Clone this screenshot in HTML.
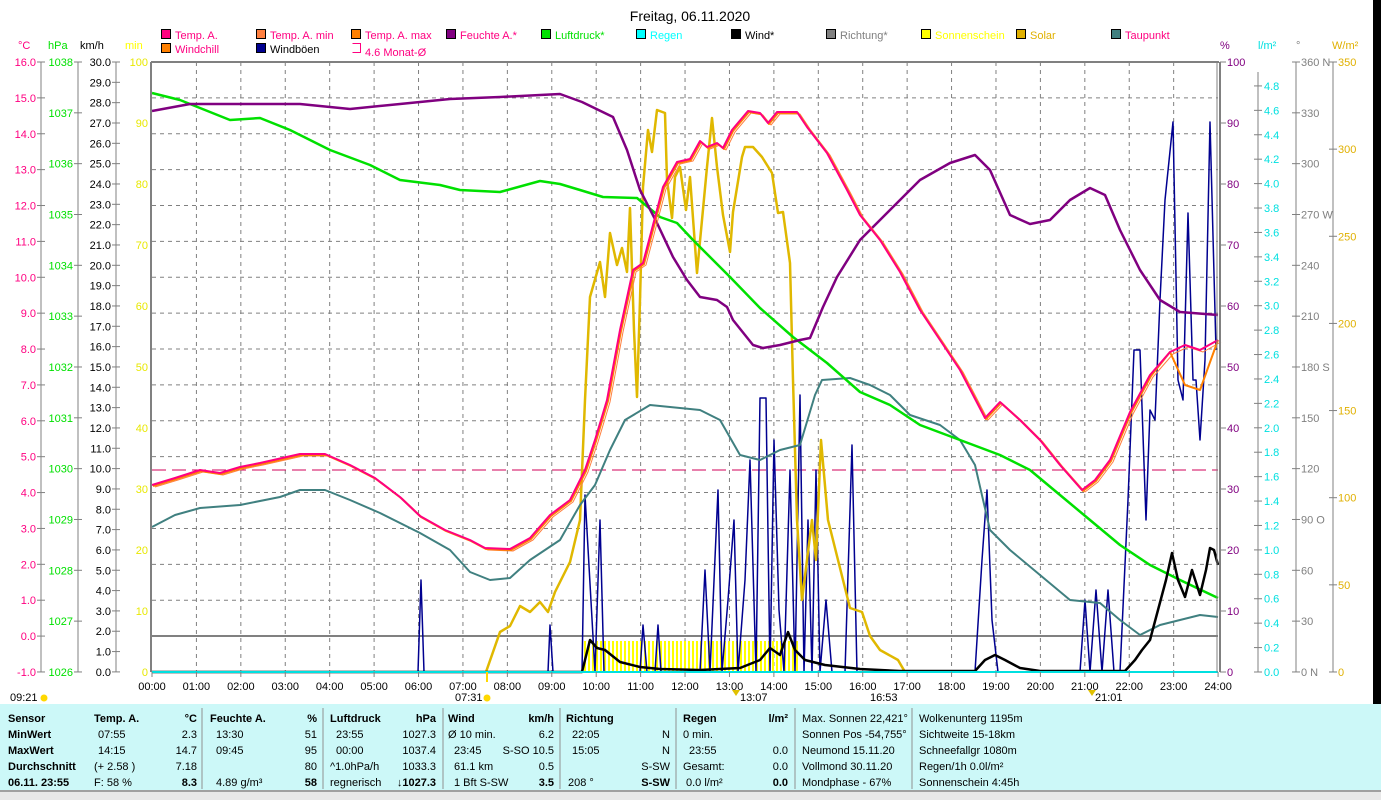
<!DOCTYPE html>
<html><head><meta charset="utf-8">
<style>
html,body{margin:0;padding:0;background:#fff;width:1381px;height:800px;overflow:hidden;font-family:"Liberation Sans",sans-serif;}
svg{position:absolute;left:0;top:0}
text{font-family:"Liberation Sans",sans-serif;font-size:11px}
</style></head><body>
<svg id="s" width="1381" height="800" xmlns="http://www.w3.org/2000/svg">
<rect x="1373" y="0" width="8" height="704" fill="#000"/>
<text x="690" y="21" text-anchor="middle" style="font-size:14px">Freitag, 06.11.2020</text>
<g id="grid"></g>
<defs><pattern id="sun" width="4" height="40" patternUnits="userSpaceOnUse"><rect width="2" height="40" fill="#ffff00"/></pattern></defs>
<rect x="582" y="641" width="218" height="31" fill="url(#sun)"/>
<line x1="152" y1="636" x2="1218" y2="636" stroke="#808080" stroke-width="2"/>
<line x1="152" y1="470" x2="1218" y2="470" stroke="#d0005a" stroke-width="1" stroke-dasharray="14,6"/>
<g id="curves" fill="none" stroke-linejoin="round"></g>
<line x1="152" y1="672" x2="1218" y2="672" stroke="#00e0e0" stroke-width="2"/>
<line x1="151" y1="62" x2="1219" y2="62" stroke="#808080" stroke-width="2"/>
<line x1="151" y1="62" x2="151" y2="672" stroke="#808080" stroke-width="2"/>
<line x1="1217" y1="62" x2="1217" y2="672" stroke="#808080" stroke-width="1"/>
<line x1="1220" y1="62" x2="1220" y2="672" stroke="#808080" stroke-width="2"/>
<g id="axes"></g>
<g id="legend"></g>
</svg>
<div style="position:absolute;left:0;top:704px;width:1381px;height:86px;background:#ccf8f8"></div>
<div style="position:absolute;left:0;top:790px;width:1381px;height:10px;background:#e8e8e8;border-top:2px solid #a0a0a0;box-sizing:border-box"></div>
<svg id="t" width="1381" height="800" xmlns="http://www.w3.org/2000/svg"></svg>
<script>
var NS="http://www.w3.org/2000/svg";
function el(p,tag,a,txt){var e=document.createElementNS(NS,tag);for(var k in a)e.setAttribute(k,a[k]);if(txt!=null)e.textContent=txt;p.appendChild(e);return e;}
var g=document.getElementById('grid'),ax=document.getElementById('axes'),cv=document.getElementById('curves'),lg=document.getElementById('legend'),T=document.getElementById('t');
var X0=152,PX=44.42;
for(var h=1;h<24;h++){var x=X0+h*PX;el(g,'line',{x1:x,y1:62,x2:x,y2:672,stroke:'#808080','stroke-dasharray':'4,4'});}
for(var i=1;i<17;i++){var y=62+i*35.88;el(g,'line',{x1:152,y1:y,x2:1218,y2:y,stroke:'#808080','stroke-dasharray':'4,4'});}
for(var h=0;h<=24;h++){var x=X0+h*PX;el(ax,'text',{x:x,y:690,'text-anchor':'middle'},(h<10?'0':'')+h+':00');el(ax,'line',{x1:x,y1:672,x2:x,y2:677,stroke:'#808080'});}
el(ax,'text',{x:10,y:701},'09:21');el(ax,'text',{x:455,y:701},'07:31');el(ax,'text',{x:740,y:701},'13:07');el(ax,'text',{x:870,y:701},'16:53');el(ax,'text',{x:1095,y:701},'21:01');
el(ax,'circle',{cx:44,cy:698,r:3.5,fill:'#ffd800'});el(ax,'circle',{cx:487,cy:698,r:3.5,fill:'#ffd800'});
el(ax,'rect',{x:486,y:672,width:2,height:10,fill:'#ffd800'});
el(ax,'path',{d:'M732 690 l4 6 l4 -6z',fill:'#e0c000'});el(ax,'path',{d:'M1088 690 l4 6 l4 -6z',fill:'#e0c000'});
el(ax,'line',{x1:41,y1:62,x2:41,y2:672,stroke:'#808080'});
el(ax,'line',{x1:78,y1:62,x2:78,y2:672,stroke:'#808080'});
el(ax,'line',{x1:116,y1:62,x2:116,y2:672,stroke:'#808080'});
el(ax,'text',{x:18,y:49,fill:'#ff0080'},'°C');el(ax,'text',{x:48,y:49,fill:'#00e000'},'hPa');el(ax,'text',{x:80,y:49},'km/h');el(ax,'text',{x:125,y:49,fill:'#ffff00'},'min');
for(var i=0;i<=17;i++){var v=16-i,y=62+i*35.88;el(ax,'text',{x:36,y:y+4,'text-anchor':'end',fill:'#ff0080'},v.toFixed(1));el(ax,'line',{x1:37,y1:y,x2:45,y2:y,stroke:'#808080'});}
for(var i=0;i<=12;i++){var v=1038-i,y=62+i*50.83;el(ax,'text',{x:73,y:y+4,'text-anchor':'end',fill:'#00e000'},v);el(ax,'line',{x1:74,y1:y,x2:82,y2:y,stroke:'#808080'});}
for(var i=0;i<=30;i++){var v=30-i,y=62+i*20.33;el(ax,'text',{x:111,y:y+4,'text-anchor':'end'},v.toFixed(1));el(ax,'line',{x1:112,y1:y,x2:120,y2:y,stroke:'#808080'});}
for(var i=0;i<=10;i++){var v=100-i*10,y=62+i*61;el(ax,'text',{x:148,y:y+4,'text-anchor':'end',fill:'#e8e800'},v);}
el(ax,'line',{x1:1258,y1:72,x2:1258,y2:672,stroke:'#808080'});
el(ax,'line',{x1:1296,y1:62,x2:1296,y2:672,stroke:'#808080'});
el(ax,'line',{x1:1333,y1:62,x2:1333,y2:672,stroke:'#808080'});
el(ax,'text',{x:1220,y:49,fill:'#800080'},'%');el(ax,'text',{x:1258,y:49,fill:'#00e0e0'},'l/m²');el(ax,'text',{x:1296,y:49,fill:'#808080'},'°');el(ax,'text',{x:1332,y:49,fill:'#e0b000'},'W/m²');
for(var i=0;i<=10;i++){var v=100-i*10,y=62+i*61;el(ax,'text',{x:1227,y:y+4,fill:'#800080'},v);el(ax,'line',{x1:1220,y1:y,x2:1226,y2:y,stroke:'#808080'});}
for(var i=0;i<=24;i++){var v=(i*0.2).toFixed(1),y=672-i*24.42;el(ax,'text',{x:1264,y:y+4,fill:'#00e0e0'},v);el(ax,'line',{x1:1254,y1:y,x2:1262,y2:y,stroke:'#808080'});}
var dl={360:'360 N',270:'270 W',180:'180 S',90:'90  O',0:'0   N'};
for(var i=0;i<=12;i++){var v=360-i*30,y=62+i*50.83;el(ax,'text',{x:1301,y:y+4,fill:'#808080'},dl[v]||v);el(ax,'line',{x1:1292,y1:y,x2:1300,y2:y,stroke:'#808080'});}
for(var i=0;i<=7;i++){var v=350-i*50,y=62+i*87.14;el(ax,'text',{x:1338,y:y+4,fill:'#e0b000'},v);el(ax,'line',{x1:1329,y1:y,x2:1337,y2:y,stroke:'#808080'});}
var L=[[162,38,'#ff0080','Temp. A.','#ff0080'],[257,38,'#ff8040','Temp. A. min','#ff0080'],[352,38,'#ff8000','Temp. A. max','#ff0080'],[447,38,'#800080','Feuchte A.*','#ff0080'],[542,38,'#00e000','Luftdruck*','#00e000'],[637,38,'#00ffff','Regen','#00ffff'],[732,38,'#000000','Wind*','#000'],[827,38,'#808080','Richtung*','#808080'],[922,38,'#ffff00','Sonnenschein','#ffff00'],[1017,38,'#e0b000','Solar','#e0b000'],[1112,38,'#408080','Taupunkt','#ff0080'],[162,52,'#ff8000','Windchill','#ff0080'],[257,52,'#000090','Windböen','#000']];
L.forEach(function(a){el(lg,'rect',{x:a[0]-0.5,y:a[1]-8.5,width:9,height:9,fill:a[2],stroke:'#000'});el(lg,'text',{x:a[0]+13,y:a[1]+1,fill:a[4]},a[3]);});
el(lg,'path',{d:'M352.5 43.5h8v9h-8',fill:'none',stroke:'#ff0080'});el(lg,'text',{x:365,y:56,fill:'#ff0080'},'4.6 Monat-Ø');
function P(pts,col,w){el(cv,'polyline',{points:pts.map(function(p){return p.join(',')}).join(' '),stroke:col,'stroke-width':w||2});}
var temp=[[152,485],[175,478],[200,470],[220,473],[240,467],[260,463],[300,454],[325,454],[350,465],[375,478],[400,497],[420,516],[445,530],[470,540],[485,548],[510,549],[530,538],[550,515],[570,500],[585,470],[595,440],[607,400],[620,330],[633,270],[643,263],[663,187],[677,162],[690,159],[700,141],[707,147],[717,143],[723,148],[732,130],[748,111],[760,113],[768,123],[777,112],[797,112],[807,127],[827,153],[847,190],[860,215],[880,240],[900,272],[920,310],[940,340],[960,370],[985,418],[1000,402],[1020,420],[1040,440],[1060,465],[1082,490],[1095,480],[1110,460],[1130,412],[1150,375],[1170,352],[1185,345],[1200,350],[1218,340]];
var gust=[[152,672],[418,672],[421,580],[424,672],[548,672],[550,625],[553,672],[582,672],[585,495],[595,672],[600,520],[604,672],[640,672],[643,625],[647,672],[655,672],[658,625],[661,672],[700,672],[705,570],[710,672],[718,490],[722,672],[728,600],[734,520],[738,672],[745,580],[750,460],[756,672],[760,398],[766,398],[770,672],[774,440],[779,610],[784,672],[790,470],[795,672],[800,395],[804,672],[808,520],[812,672],[816,470],[820,672],[826,600],[832,672],[845,672],[852,445],[857,672],[975,672],[982,560],[987,490],[992,620],[998,672],[1080,672],[1085,600],[1090,672],[1096,590],[1102,672],[1108,590],[1114,672],[1120,672],[1128,500],[1134,350],[1140,350],[1146,520],[1150,410],[1155,420],[1160,300],[1165,200],[1173,122],[1178,380],[1183,400],[1188,213],[1193,380],[1196,380],[1200,440],[1205,360],[1210,122],[1216,350]];
P(gust,'#000090',1.5);
P([[486,672],[500,632],[510,626],[520,606],[530,612],[540,602],[548,612],[555,592],[570,562],[580,520],[585,400],[590,297],[600,262],[605,297],[610,233],[617,265],[622,248],[627,272],[630,208],[634,330],[637,397],[640,300],[643,187],[648,130],[652,152],[657,110],[665,113],[667,180],[672,218],[675,177],[680,167],[686,210],[690,177],[697,273],[707,167],[712,118],[717,167],[723,215],[730,252],[733,212],[742,157],[745,147],[753,147],[762,157],[772,173],[778,213],[783,212],[790,263],[793,380],[797,520],[802,600],[807,560],[812,520],[816,560],[821,440],[828,520],[838,560],[850,608],[862,612],[870,636],[880,650],[898,660],[905,672]],'#e0b800',2.5);
P([[152,527],[175,515],[200,508],[240,505],[280,497],[300,490],[325,490],[350,500],[380,513],[420,533],[450,550],[470,572],[490,580],[510,578],[530,560],[560,540],[580,505],[595,485],[610,450],[625,420],[650,405],[680,408],[700,410],[720,420],[740,455],[760,460],[780,450],[800,445],[815,395],[822,380],[850,378],[870,385],[890,395],[910,415],[940,425],[960,440],[975,465],[990,530],[1010,550],[1040,575],[1070,600],[1100,603],[1120,620],[1140,635],[1160,625],[1180,620],[1200,615],[1218,617]],'#408080',2);
P([[152,93],[180,100],[200,108],[230,120],[260,118],[290,130],[330,150],[370,165],[400,180],[440,185],[460,190],[500,192],[540,181],[560,184],[580,190],[603,197],[637,198],[660,217],[677,223],[693,240],[730,277],[760,308],[793,337],[827,363],[860,392],[890,405],[920,425],[960,440],[1000,455],[1030,470],[1060,495],[1090,520],[1120,545],[1150,565],[1180,580],[1218,598]],'#00e000',2.5);
P([[152,111],[190,104],[300,104],[350,109],[400,104],[450,99],[500,97],[560,94],[582,102],[613,117],[627,150],[640,190],[657,223],[673,257],[687,280],[700,297],[717,300],[727,307],[733,320],[753,345],[763,348],[780,345],[800,340],[810,338],[823,307],[837,277],[860,240],[890,210],[920,180],[950,163],[975,155],[990,170],[1010,215],[1030,224],[1050,220],[1070,200],[1090,188],[1105,195],[1120,230],[1140,270],[1160,300],[1180,312],[1218,315]],'#800080',2.5);
P(temp.map(function(p){return [p[0]+3,p[1]+2]}),'#ff8040',1);
P(temp.map(function(p){return p[0]>1160?[p[0],p[1]+(p[0]>1175&&p[0]<1215?40:0)]:[p[0]+1,p[1]+1]}),'#ff8000',2);
P(temp,'#ff0080',2);
P([[152,672],[582,672],[590,640],[597,648],[605,650],[620,662],[640,667],[660,669],[700,670],[740,668],[760,660],[770,648],[780,655],[788,632],[795,650],[805,660],[825,665],[860,669],[900,671],[975,671],[985,660],[995,655],[1005,660],[1020,668],[1040,671],[1125,671],[1135,660],[1142,650],[1150,640],[1158,610],[1166,580],[1172,553],[1178,580],[1185,597],[1192,570],[1200,595],[1206,570],[1210,548],[1214,550],[1218,565]],'#000',2.5);
var tb=T;
function tx(x,y,s,o){o=o||{};var a={x:x,y:y,style:'font-size:11px'+(o.b?';font-weight:bold':'')};if(o.r)a['text-anchor']='end';el(tb,'text',a,s);}
[202,323,443,560,676,795,912].forEach(function(x){el(tb,'line',{x1:x,y1:708,x2:x,y2:789,stroke:'#909090'});});
var ys=[722,738,754,770,786];
tx(8,ys[0],'Sensor',{b:1});tx(8,ys[1],'MinWert',{b:1});tx(8,ys[2],'MaxWert',{b:1});tx(8,ys[3],'Durchschnitt',{b:1});tx(8,ys[4],'06.11. 23:55',{b:1});
tx(94,ys[0],'Temp. A.',{b:1});tx(197,ys[0],'°C',{b:1,r:1});tx(98,ys[1],'07:55');tx(197,ys[1],'2.3',{r:1});tx(98,ys[2],'14:15');tx(197,ys[2],'14.7',{r:1});tx(94,ys[3],'(+ 2.58 )');tx(197,ys[3],'7.18',{r:1});tx(94,ys[4],'F: 58 %');tx(197,ys[4],'8.3',{b:1,r:1});
tx(210,ys[0],'Feuchte A.',{b:1});tx(317,ys[0],'%',{b:1,r:1});tx(216,ys[1],'13:30');tx(317,ys[1],'51',{r:1});tx(216,ys[2],'09:45');tx(317,ys[2],'95',{r:1});tx(317,ys[3],'80',{r:1});tx(216,ys[4],'4.89 g/m³');tx(317,ys[4],'58',{b:1,r:1});
tx(330,ys[0],'Luftdruck',{b:1});tx(436,ys[0],'hPa',{b:1,r:1});tx(336,ys[1],'23:55');tx(436,ys[1],'1027.3',{r:1});tx(336,ys[2],'00:00');tx(436,ys[2],'1037.4',{r:1});tx(330,ys[3],'^1.0hPa/h');tx(436,ys[3],'1033.3',{r:1});tx(330,ys[4],'regnerisch');tx(436,ys[4],'↓1027.3',{b:1,r:1});
tx(448,ys[0],'Wind',{b:1});tx(554,ys[0],'km/h',{b:1,r:1});tx(448,ys[1],'Ø 10 min.');tx(554,ys[1],'6.2',{r:1});tx(454,ys[2],'23:45');tx(554,ys[2],'S-SO 10.5',{r:1});tx(454,ys[3],'61.1 km');tx(554,ys[3],'0.5',{r:1});tx(454,ys[4],'1 Bft S-SW');tx(554,ys[4],'3.5',{b:1,r:1});
tx(566,ys[0],'Richtung',{b:1});tx(572,ys[1],'22:05');tx(670,ys[1],'N',{r:1});tx(572,ys[2],'15:05');tx(670,ys[2],'N',{r:1});tx(670,ys[3],'S-SW',{r:1});tx(568,ys[4],'208 °');tx(670,ys[4],'S-SW',{b:1,r:1});
tx(683,ys[0],'Regen',{b:1});tx(788,ys[0],'l/m²',{b:1,r:1});tx(683,ys[1],'0 min.');tx(689,ys[2],'23:55');tx(788,ys[2],'0.0',{r:1});tx(683,ys[3],'Gesamt:');tx(788,ys[3],'0.0',{r:1});tx(686,ys[4],'0.0 l/m²');tx(788,ys[4],'0.0',{b:1,r:1});
tx(802,ys[0],'Max. Sonnen 22,421°');tx(802,ys[1],'Sonnen Pos  -54,755°');tx(802,ys[2],'Neumond     15.11.20');tx(802,ys[3],'Vollmond     30.11.20');tx(802,ys[4],'Mondphase      - 67%');
tx(919,ys[0],'Wolkenunterg 1195m');tx(919,ys[1],'Sichtweite    15-18km');tx(919,ys[2],'Schneefallgr   1080m');tx(919,ys[3],'Regen/1h     0.0l/m²');tx(919,ys[4],'Sonnenschein  4:45h');
</script>
</body></html>
